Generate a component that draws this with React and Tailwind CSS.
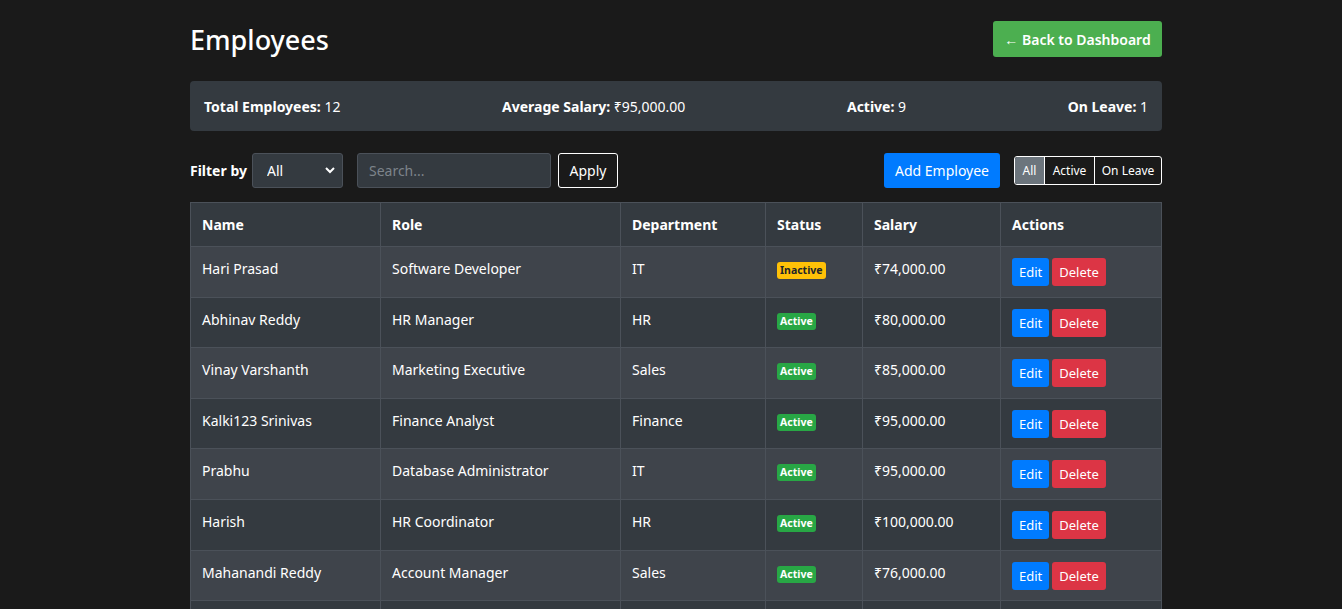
import React from 'react';

const employees = [
  { name: 'Hari Prasad', role: 'Software Developer', dept: 'IT', status: 'Inactive', salary: '₹74,000.00' },
  { name: 'Abhinav Reddy', role: 'HR Manager', dept: 'HR', status: 'Active', salary: '₹80,000.00' },
  { name: 'Vinay Varshanth', role: 'Marketing Executive', dept: 'Sales', status: 'Active', salary: '₹85,000.00' },
  { name: 'Kalki123 Srinivas', role: 'Finance Analyst', dept: 'Finance', status: 'Active', salary: '₹95,000.00' },
  { name: 'Prabhu', role: 'Database Administrator', dept: 'IT', status: 'Active', salary: '₹95,000.00' },
  { name: 'Harish', role: 'HR Coordinator', dept: 'HR', status: 'Active', salary: '₹100,000.00' },
  { name: 'Mahanandi Reddy', role: 'Account Manager', dept: 'Sales', status: 'Active', salary: '₹76,000.00' },
  { name: 'Srikanth', role: 'Sales Executive', dept: 'Sales', status: 'On Leave', salary: '₹60,000.00' },
];

function Badge({ status }) {
  if (status === 'Inactive') {
    return (
      <span className="inline-block rounded-[3px] bg-[#ffc107] px-[3px] text-[10.5px] font-bold leading-[17px] text-[#212529]">
        {status}
      </span>
    );
  }
  if (status === 'On Leave') {
    return (
      <span className="inline-block rounded-[3px] bg-[#17a2b8] px-[3px] text-[10.5px] font-bold leading-[17px] text-white">
        {status}
      </span>
    );
  }
  return (
    <span className="inline-block rounded-[3px] bg-[#28a745] px-[3px] text-[10.5px] font-bold leading-[17px] text-white">
      {status}
    </span>
  );
}

function Row({ emp, index }) {
  const bg = index % 2 === 0 ? 'bg-[#3f444b]' : 'bg-[#343a40]';
  const cell = 'border border-[#4b5159] px-[11px] pt-[11px] pb-[10.6px] align-top leading-[22px]';
  return (
    <tr className={bg}>
      <td className={cell}>{emp.name}</td>
      <td className={cell}>{emp.role}</td>
      <td className={cell}>{emp.dept}</td>
      <td className={cell}>
        <Badge status={emp.status} />
      </td>
      <td className={cell}>{emp.salary}</td>
      <td className={cell}>
        <div className="flex gap-[3px]">
          <button className="h-[28px] rounded-[3px] bg-[#007bff] px-[7px] text-[13px] text-white">Edit</button>
          <button className="h-[28px] rounded-[3px] bg-[#dc3545] px-[7px] text-[13px] text-white">Delete</button>
        </div>
      </td>
    </tr>
  );
}

export default function App() {
  return (
    <div
      className="min-h-[609px] bg-[#1a1a1a] pl-[10px] text-[14px] text-white"
      style={{ fontFamily: '"Noto Sans", "Open Sans", sans-serif' }}
    >
      <div className="mx-auto w-[972px] pt-[21px]">
        {/* header */}
        <div className="flex h-[36px] items-center justify-between">
          <h1 className="text-[27px] font-medium leading-none">Employees</h1>
          <button className="h-[36px] w-[169px] rounded-[3px] bg-[#4caf50] text-[14px] font-semibold text-white">
            ← Back to Dashboard
          </button>
        </div>

        {/* stats */}
        <div className="mt-[24px] flex h-[50px] items-center justify-between rounded-[4px] bg-[#343a40] px-[14px] text-[14px]">
          <div>
            <span className="font-bold">Total Employees:</span> 12
          </div>
          <div>
            <span className="font-bold">Average Salary:</span> ₹95,000.00
          </div>
          <div>
            <span className="font-bold">Active:</span> 9
          </div>
          <div>
            <span className="font-bold">On Leave:</span> 1
          </div>
        </div>

        {/* filters */}
        <div className="mt-[22px] flex h-[35px] items-center justify-between">
          <div className="flex items-center">
            <span className="mr-[5px] text-[14px] font-bold">Filter by</span>
            <div className="relative">
              <select className="h-[35px] w-[91px] appearance-none rounded-[3px] border border-[#4b5159] bg-[#343a40] pl-[14px] text-[14px] text-white outline-none">
                <option>All</option>
              </select>
              <svg
                className="pointer-events-none absolute right-[8px] top-[13px]"
                width="10"
                height="8"
                viewBox="0 0 10 8"
              >
                <path d="M1 2 L5 6 L9 2" fill="none" stroke="white" strokeWidth="2" />
              </svg>
            </div>
            <input
              placeholder="Search..."
              className="ml-[14px] h-[35px] w-[194px] rounded-[3px] border border-[#4b5159] bg-[#343a40] px-[11px] text-[14px] text-white outline-none placeholder:text-[#7d848b]"
            />
            <button className="ml-[7px] h-[35px] w-[60px] rounded-[3px] border border-white text-[14px] text-white">
              Apply
            </button>
          </div>
          <div className="flex items-center">
            <button className="h-[35px] w-[116px] rounded-[3px] bg-[#007bff] text-[14px] text-white">
              Add Employee
            </button>
            <div className="ml-[14px] flex h-[29px] overflow-hidden rounded-[3px] border border-white text-[12px]">
              <button className="w-[29px] bg-[#6c757d] text-white">All</button>
              <button className="w-[50px] border-l border-white text-white">Active</button>
              <button className="w-[67px] border-l border-white text-white">On Leave</button>
            </div>
          </div>
        </div>

        {/* table */}
        <table className="mt-[14px] w-[971px] table-fixed border-collapse text-left text-[14px]">
          <colgroup>
            <col className="w-[190px]" />
            <col className="w-[240px]" />
            <col className="w-[145px]" />
            <col className="w-[97px]" />
            <col className="w-[138px]" />
            <col className="w-[161px]" />
          </colgroup>
          <thead>
            <tr className="bg-[#343a40]">
              {['Name', 'Role', 'Department', 'Status', 'Salary', 'Actions'].map((h) => (
                <th key={h} className="h-[44px] border border-[#4b5159] px-[11px] font-bold">
                  {h}
                </th>
              ))}
            </tr>
          </thead>
          <tbody>
            {employees.map((emp, i) => (
              <Row key={emp.name} emp={emp} index={i} />
            ))}
          </tbody>
        </table>
      </div>
    </div>
  );
}
